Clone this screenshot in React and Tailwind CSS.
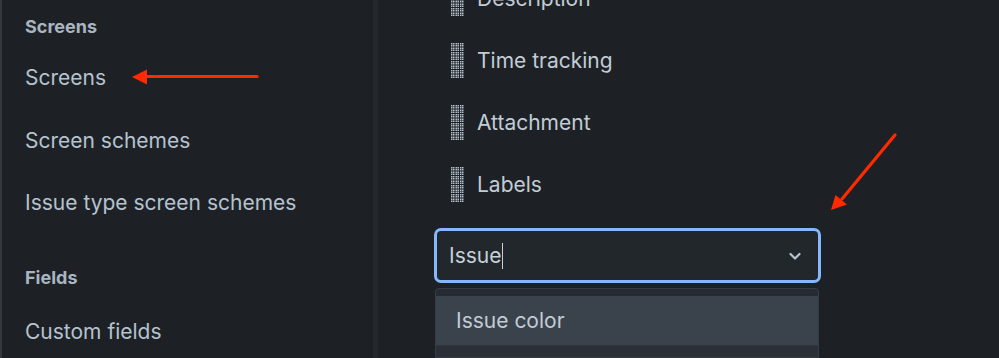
import React from "react";

function DragHandle() {
  const dots = [];
  for (let bx = 0; bx < 3; bx++) {
    for (let by = 0; by < 8; by++) {
      for (let dx = 0; dx < 2; dx++) {
        for (let dy = 0; dy < 2; dy++) {
          dots.push(
            <rect
              key={`${bx}-${by}-${dx}-${dy}`}
              x={bx * 4.5 + dx * 2}
              y={by * 4.5 + dy * 2}
              width="1.5"
              height="1.5"
              fill="#b3bec9"
            />
          );
        }
      }
    }
  }
  return (
    <svg width="13" height="36" viewBox="0 0 13 36" className="shrink-0">
      {dots}
    </svg>
  );
}

function FieldRow({ label }) {
  return (
    <div className="h-[62px] shrink-0 flex items-center gap-[13px]">
      <DragHandle />
      <span className="text-[21px] text-[#c2ccd6]">{label}</span>
    </div>
  );
}

export default function App() {
  return (
    <div
      className="relative w-[999px] h-[358px] overflow-hidden flex bg-[#1d2125]"
      style={{ fontFamily: "Inter, 'Noto Sans', sans-serif" }}
    >
      {/* Sidebar */}
      <div className="w-[373px] h-full shrink-0 border-l-2 border-[#33383e] bg-[#1d2125] pl-[23px] flex flex-col">
        <div className="h-[46px] shrink-0 pt-[6px] flex items-center text-[18px] font-bold text-[#aab5c1]">
          Screens
        </div>
        <div className="h-[63px] shrink-0 flex items-center text-[21px] text-[#b6c2cf]">Screens</div>
        <div className="h-[63px] shrink-0 flex items-center text-[21px] text-[#b6c2cf]">Screen schemes</div>
        <div className="h-[62px] shrink-0 flex items-center text-[21px] text-[#b6c2cf]">Issue type screen schemes</div>
        <div className="mt-[28px] h-[30px] shrink-0 flex items-center text-[18px] font-bold text-[#aab5c1]">
          Fields
        </div>
        <div className="mt-[8px] h-[63px] shrink-0 flex items-center text-[21px] text-[#b6c2cf]">Custom fields</div>
      </div>
      {/* Divider */}
      <div className="w-[5px] h-full shrink-0 bg-[#24282d]" />
      {/* Main */}
      <div className="flex-1 h-full flex flex-col pl-[56px]">
        <div className="mt-[-32px] pl-[17px] shrink-0 flex flex-col">
          <FieldRow label="Description" />
          <FieldRow label="Time tracking" />
          <FieldRow label="Attachment" />
          <FieldRow label="Labels" />
        </div>
        <div className="mt-[12px] shrink-0 w-[387px] h-[55px] rounded-[7px] border-[3px] border-[#85b8ff] bg-[#22272b] flex items-center pl-[12px] pr-[16px]">
          <span className="text-[21px] text-[#c7d1db]">Issue</span>
          <span className="ml-[1px] w-[1px] h-[26px] bg-[#c7d1db]" />
          <div className="flex-1" />
          <svg width="14" height="14" viewBox="0 0 14 14">
            <path d="M2.5 5 L7 9.5 L11.5 5" fill="none" stroke="#b6c2cf" strokeWidth="2.2" strokeLinecap="round" strokeLinejoin="round" />
          </svg>
        </div>
        <div className="mt-[5px] ml-[1px] w-[384px] flex-1 rounded-t-[4px] border border-[#353c43] bg-[#2a3036] flex flex-col">
          <div className="h-[7px] shrink-0 bg-[#262b31] rounded-t-[4px]" />
          <div className="h-[49px] shrink-0 bg-[#3a434c] flex items-center pl-[20px] text-[21px] text-[#c2ccd6]">
            Issue color
          </div>
          <div className="flex-1 border-t border-[#30363c]" />
        </div>
      </div>
      {/* Annotation arrows */}
      <svg className="absolute inset-0 pointer-events-none" width="999" height="358" viewBox="0 0 999 358">
        <line x1="257" y1="76.5" x2="144" y2="76.5" stroke="#ff2a00" strokeWidth="3.2" strokeLinecap="round" />
        <polygon points="132,77 147,69.5 147,84.5" fill="#ff2a00" />
        <line x1="895" y1="135" x2="842" y2="199" stroke="#ff2a00" strokeWidth="3.2" strokeLinecap="round" />
        <polygon points="831,210 835.5,195 847,204.5" fill="#ff2a00" />
      </svg>
    </div>
  );
}
